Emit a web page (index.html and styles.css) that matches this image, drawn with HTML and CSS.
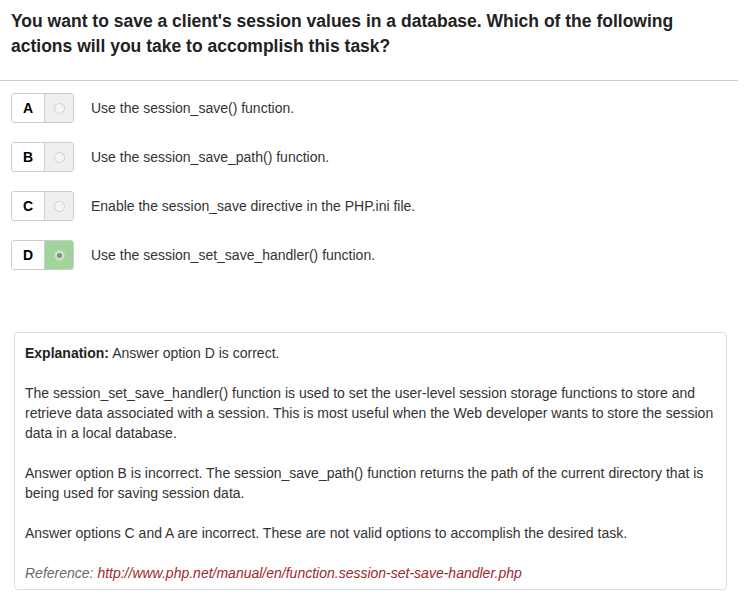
FILE: index.html
```html
<!DOCTYPE html>
<html>
<head>
<meta charset="utf-8">
<link rel="stylesheet" href="styles.css">
</head>
<body>
<div class="page">
  <h1 class="question">You want to save a client's session values in a database. Which of the following actions will you take to accomplish this task?</h1>
  <hr class="rule">
  <ul class="options">
    <li class="option">
      <span class="choice"><span class="letter">A</span><span class="radio-cell"><span class="radio"></span></span></span>
      <span class="option-text">Use the session_save() function.</span>
    </li>
    <li class="option">
      <span class="choice"><span class="letter">B</span><span class="radio-cell"><span class="radio"></span></span></span>
      <span class="option-text">Use the session_save_path() function.</span>
    </li>
    <li class="option">
      <span class="choice"><span class="letter">C</span><span class="radio-cell"><span class="radio"></span></span></span>
      <span class="option-text">Enable the session_save directive in the PHP.ini file.</span>
    </li>
    <li class="option">
      <span class="choice"><span class="letter">D</span><span class="radio-cell selected"><span class="radio checked"></span></span></span>
      <span class="option-text">Use the session_set_save_handler() function.</span>
    </li>
  </ul>
  <div class="explanation">
    <p><strong>Explanation:</strong> Answer option D is correct.</p>
    <p>The session_set_save_handler() function is used to set the user-level session storage functions to store and retrieve data associated with a session. This is most useful when the Web developer wants to store the session data in a local database.</p>
    <p>Answer option B is incorrect. The session_save_path() function returns the path of the current directory that is being used for saving session data.</p>
    <p>Answer options C and A are incorrect. These are not valid options to accomplish the desired task.</p>
    <p class="reference">Reference: <a href="#">http://www.php.net/manual/en/function.session-set-save-handler.php</a></p>
  </div>
</div>
</body>
</html>
```
FILE: styles.css
```css
html, body {
  margin: 0;
  padding: 0;
  background: #fff;
}
body {
  font-family: "Liberation Sans", Arial, sans-serif;
  color: #333;
}
.page {
  width: 749px;
}
.question {
  margin: 0;
  padding: 9px 11px 0 11px;
  font-size: 17.5px;
  line-height: 25px;
  font-weight: bold;
  color: #222;
  width: 680px;
}
.rule {
  margin: 21px 11px 0 0;
  border: 0;
  border-top: 1px solid #ccc;
  height: 0;
}
.options {
  list-style: none;
  margin: 0;
  padding: 12px 0 0 11px;
}
.option {
  display: flex;
  align-items: center;
  height: 30px;
  margin-bottom: 19px;
}
.choice {
  display: flex;
  width: 63px;
  height: 30px;
  box-sizing: border-box;
  border: 1px solid #ccc;
  border-radius: 3px;
  overflow: hidden;
}
.letter {
  width: 32px;
  display: flex;
  align-items: center;
  justify-content: center;
  font-size: 14px;
  font-weight: bold;
  color: #000;
  background: #fff;
  border-right: 1px solid #ccc;
}
.radio-cell {
  flex: 1;
  display: flex;
  align-items: center;
  justify-content: center;
  background: #eee;
}
.radio-cell.selected {
  background: #9fd59a;
}
.radio {
  width: 11px;
  height: 11px;
  box-sizing: border-box;
  border-radius: 50%;
  border: 1px solid #d0d0d0;
  background: #f4f4f4;
  position: relative;
}
.radio.checked {
  border-color: #b8dcb4;
  background: #c9e7c5;
}
.radio.checked::after {
  content: "";
  position: absolute;
  left: 2px;
  top: 2px;
  width: 5px;
  height: 5px;
  border-radius: 50%;
  background: #8a8a8a;
}
.option-text {
  margin-left: 17px;
  font-size: 14px;
  color: #333;
}
.explanation {
  margin: 62px 22px 0 14px;
  border: 1px solid #ddd;
  border-radius: 4px;
  padding: 10px 10px 6px 10px;
  font-size: 14px;
  line-height: 20px;
  color: #333;
}
.explanation p {
  margin: 0 0 20px 0;
}
.explanation p:last-child {
  margin-bottom: 0;
}
.explanation strong {
  color: #222;
}
.reference {
  font-style: italic;
  color: #6a6a6a;
}
.reference a {
  color: #a0282b;
  text-decoration: none;
}
```
